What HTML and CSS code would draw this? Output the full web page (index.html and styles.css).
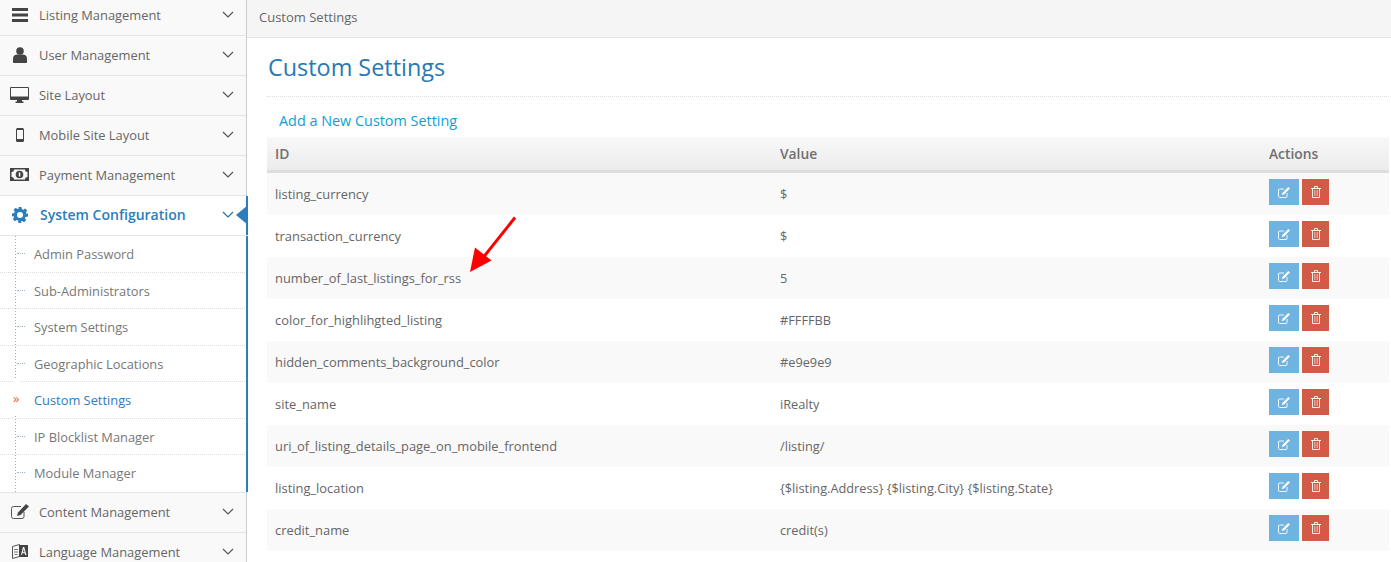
FILE: index.html
```html
<!DOCTYPE html>
<html lang="en">
<head>
<meta charset="utf-8">
<title>Custom Settings</title>
<link rel="stylesheet" href="styles.css">
</head>
<body>
<div class="layout">
  <nav class="sidebar">
    <a class="nav-item first"><span class="nav-icon"><svg width="16" height="14" viewBox="0 0 16 14"><path fill="#444" d="M0 0h16v3H0zM0 5.500h16v3H0zM0 11h16v3H0z"/></svg></span><span class="nav-label">Listing Management</span><svg class="chev" width="12" height="7" viewBox="0 0 12 7"><path d="M1 1l5 5 5-5" fill="none" stroke="#555" stroke-width="1.200"/></svg></a>
    <a class="nav-item"><span class="nav-icon"><svg width="14" height="16" viewBox="0 0 14 16"><circle cx="7" cy="4" r="3.800" fill="#444"/><path fill="#444" d="M0 15v-3.500C0 9 2 7.500 4 7.500h6c2 0 4 1.500 4 4V15c0 .6-.4 1-1 1H1c-.6 0-1-.4-1-1z"/></svg></span><span class="nav-label">User Management</span><svg class="chev" width="12" height="7" viewBox="0 0 12 7"><path d="M1 1l5 5 5-5" fill="none" stroke="#555" stroke-width="1.200"/></svg></a>
    <a class="nav-item"><span class="nav-icon"><svg width="19" height="16" viewBox="0 0 19 16"><path fill="#444" d="M1 0h17a1 1 0 0 1 1 1v11a1 1 0 0 1-1 1h-6v1.500h1.500V16h-8v-1.500H7V13H1a1 1 0 0 1-1-1V1a1 1 0 0 1 1-1z"/><rect x="1" y="1" width="17" height="8.500" fill="#fafafa"/></svg></span><span class="nav-label">Site Layout</span><svg class="chev" width="12" height="7" viewBox="0 0 12 7"><path d="M1 1l5 5 5-5" fill="none" stroke="#555" stroke-width="1.200"/></svg></a>
    <a class="nav-item"><span class="nav-icon"><svg width="8" height="14" viewBox="0 0 8 14"><rect width="8" height="14" rx="1.500" fill="#444"/><rect x="1" y="2" width="6" height="9" fill="#fafafa"/></svg></span><span class="nav-label">Mobile Site Layout</span><svg class="chev" width="12" height="7" viewBox="0 0 12 7"><path d="M1 1l5 5 5-5" fill="none" stroke="#555" stroke-width="1.200"/></svg></a>
    <a class="nav-item"><span class="nav-icon"><svg width="19" height="13" viewBox="0 0 19 13"><rect width="19" height="13" fill="#444"/><path fill="#fafafa" d="M4 1.500h11a2.500 2.500 0 0 0 2.500 2.500v5A2.500 2.500 0 0 0 15 11.500H4A2.500 2.500 0 0 0 1.500 9V4A2.500 2.500 0 0 0 4 1.500z"/><circle cx="9.500" cy="6.500" r="3.800" fill="#444"/><rect x="8.800" y="4.500" width="1.500" height="4" fill="#fafafa"/></svg></span><span class="nav-label">Payment Management</span><svg class="chev" width="12" height="7" viewBox="0 0 12 7"><path d="M1 1l5 5 5-5" fill="none" stroke="#555" stroke-width="1.200"/></svg></a>
    <div class="nav-group">
      <a class="nav-item active"><span class="nav-icon"><svg width="16" height="16" viewBox="0 0 16 16"><path fill="#2b7dbc" fill-rule="evenodd" d="M6.500 0h3l.4 2.200 1.300.6L13.100 1.500l2.100 2.100-1.300 1.900.6 1.300L16 6.500v3l-2.500.4-.6 1.300 1.300 1.900-2.100 2.100-1.900-1.300-1.300.6L9.500 16h-3l-.4-2.500-1.300-.6-1.900 1.300L.8 12.100l1.300-1.900-.6-1.300L0 9.500v-3l2.200-.4.600-1.300L1.500 2.900 3.600.8l1.900 1.300 1.300-.6zM8 5a3 3 0 1 0 0 6 3 3 0 0 0 0-6z"/></svg></span><span class="nav-label">System Configuration</span><svg class="chev" width="12" height="7" viewBox="0 0 12 7"><path d="M1 1l5 5 5-5" fill="none" stroke="#2b6ea3" stroke-width="1.200"/></svg><span class="notch"></span></a>
      <ul class="submenu">
        <li><a>Admin Password</a></li>
        <li><a>Sub-Administrators</a></li>
        <li><a>System Settings</a></li>
        <li><a>Geographic Locations</a></li>
        <li class="current"><a>Custom Settings</a></li>
        <li><a>IP Blocklist Manager</a></li>
        <li><a>Module Manager</a></li>
      </ul>
    </div>
    <a class="nav-item"><span class="nav-icon"><svg width="18" height="15" viewBox="0 0 18 15"><path d="M13 8v4.500a2 2 0 0 1-2 2H2.500a2 2 0 0 1-2-2V4.500a2 2 0 0 1 2-2H10" fill="none" stroke="#555" stroke-width="1"/><path fill="#444" d="M15 0l3 2.500-8.500 8.500-3.500 1 1-3.500z"/></svg></span><span class="nav-label">Content Management</span><svg class="chev" width="12" height="7" viewBox="0 0 12 7"><path d="M1 1l5 5 5-5" fill="none" stroke="#555" stroke-width="1.200"/></svg></a>
    <a class="nav-item"><span class="nav-icon"><svg width="16" height="18" viewBox="0 0 16 18"><path fill="none" stroke="#555" d="M.500 3.500l7-2v12l-7 2z"/><path d="M2 6.500h4M2 9h4M2.500 11.500h3" stroke="#777"/><path fill="#444" d="M7 2h9v12H7z"/><path fill="#fafafa" d="M11 4h1.200l2.300 8h-1.300l-.5-1.800h-2.400l-.5 1.800H9zM10.900 9.200h1.700l-.8-3.300z"/></svg></span><span class="nav-label">Language Management</span><svg class="chev" width="12" height="7" viewBox="0 0 12 7"><path d="M1 1l5 5 5-5" fill="none" stroke="#555" stroke-width="1.200"/></svg></a>
  </nav>
  <main class="main">
    <div class="crumbs">Custom Settings</div>
    <div class="page">
      <h1 class="title">Custom Settings</h1>
      <a class="add-link">Add a New Custom Setting</a>
      <table class="grid">
        <thead><tr><th class="col-id">ID</th><th class="col-value">Value</th><th>Actions</th></tr></thead>
        <tbody id="rows">
          <tr><td>listing_currency</td><td>$</td><td><span class="actions"><a class="btn edit"><svg width="12" height="11" viewBox="0 0 12 11"><path d="M9 6v3.500a1 1 0 0 1-1 1H1.500a1 1 0 0 1-1-1V3a1 1 0 0 1 1-1H6" fill="none" stroke="#fff" stroke-width=".9"/><path fill="#fff" d="M10.300 0L12 1.500 6 7.500l-2.200.6.600-2.200z"/></svg></a><a class="btn del"><svg width="10" height="12" viewBox="0 0 10 12"><path d="M0 2.500h10M3.500 2.500V.5h3v2M1.500 2.500V11.500h7V2.500" fill="none" stroke="#fff" stroke-width=".9"/><path d="M3.500 4v6M5 4v6M6.500 4v6" stroke="#f0b4a8" stroke-width=".8"/></svg></a></span></td></tr>
          <tr><td>transaction_currency</td><td>$</td><td><span class="actions"><a class="btn edit"><svg width="12" height="11" viewBox="0 0 12 11"><path d="M9 6v3.500a1 1 0 0 1-1 1H1.500a1 1 0 0 1-1-1V3a1 1 0 0 1 1-1H6" fill="none" stroke="#fff" stroke-width=".9"/><path fill="#fff" d="M10.300 0L12 1.500 6 7.500l-2.200.6.600-2.200z"/></svg></a><a class="btn del"><svg width="10" height="12" viewBox="0 0 10 12"><path d="M0 2.500h10M3.500 2.500V.5h3v2M1.500 2.500V11.500h7V2.500" fill="none" stroke="#fff" stroke-width=".9"/><path d="M3.500 4v6M5 4v6M6.500 4v6" stroke="#f0b4a8" stroke-width=".8"/></svg></a></span></td></tr>
          <tr><td>number_of_last_listings_for_rss</td><td>5</td><td><span class="actions"><a class="btn edit"><svg width="12" height="11" viewBox="0 0 12 11"><path d="M9 6v3.500a1 1 0 0 1-1 1H1.500a1 1 0 0 1-1-1V3a1 1 0 0 1 1-1H6" fill="none" stroke="#fff" stroke-width=".9"/><path fill="#fff" d="M10.300 0L12 1.500 6 7.500l-2.200.6.600-2.200z"/></svg></a><a class="btn del"><svg width="10" height="12" viewBox="0 0 10 12"><path d="M0 2.500h10M3.500 2.500V.5h3v2M1.500 2.500V11.500h7V2.500" fill="none" stroke="#fff" stroke-width=".9"/><path d="M3.500 4v6M5 4v6M6.500 4v6" stroke="#f0b4a8" stroke-width=".8"/></svg></a></span></td></tr>
          <tr><td>color_for_highlihgted_listing</td><td>#FFFFBB</td><td><span class="actions"><a class="btn edit"><svg width="12" height="11" viewBox="0 0 12 11"><path d="M9 6v3.500a1 1 0 0 1-1 1H1.500a1 1 0 0 1-1-1V3a1 1 0 0 1 1-1H6" fill="none" stroke="#fff" stroke-width=".9"/><path fill="#fff" d="M10.300 0L12 1.500 6 7.500l-2.200.6.600-2.200z"/></svg></a><a class="btn del"><svg width="10" height="12" viewBox="0 0 10 12"><path d="M0 2.500h10M3.500 2.500V.5h3v2M1.500 2.500V11.500h7V2.500" fill="none" stroke="#fff" stroke-width=".9"/><path d="M3.500 4v6M5 4v6M6.500 4v6" stroke="#f0b4a8" stroke-width=".8"/></svg></a></span></td></tr>
          <tr><td>hidden_comments_background_color</td><td>#e9e9e9</td><td><span class="actions"><a class="btn edit"><svg width="12" height="11" viewBox="0 0 12 11"><path d="M9 6v3.500a1 1 0 0 1-1 1H1.500a1 1 0 0 1-1-1V3a1 1 0 0 1 1-1H6" fill="none" stroke="#fff" stroke-width=".9"/><path fill="#fff" d="M10.300 0L12 1.500 6 7.500l-2.200.6.600-2.200z"/></svg></a><a class="btn del"><svg width="10" height="12" viewBox="0 0 10 12"><path d="M0 2.500h10M3.500 2.500V.5h3v2M1.500 2.500V11.500h7V2.500" fill="none" stroke="#fff" stroke-width=".9"/><path d="M3.500 4v6M5 4v6M6.500 4v6" stroke="#f0b4a8" stroke-width=".8"/></svg></a></span></td></tr>
          <tr><td>site_name</td><td>iRealty</td><td><span class="actions"><a class="btn edit"><svg width="12" height="11" viewBox="0 0 12 11"><path d="M9 6v3.500a1 1 0 0 1-1 1H1.500a1 1 0 0 1-1-1V3a1 1 0 0 1 1-1H6" fill="none" stroke="#fff" stroke-width=".9"/><path fill="#fff" d="M10.300 0L12 1.500 6 7.500l-2.200.6.600-2.200z"/></svg></a><a class="btn del"><svg width="10" height="12" viewBox="0 0 10 12"><path d="M0 2.500h10M3.500 2.500V.5h3v2M1.500 2.500V11.500h7V2.500" fill="none" stroke="#fff" stroke-width=".9"/><path d="M3.500 4v6M5 4v6M6.500 4v6" stroke="#f0b4a8" stroke-width=".8"/></svg></a></span></td></tr>
          <tr><td>uri_of_listing_details_page_on_mobile_frontend</td><td>/listing/</td><td><span class="actions"><a class="btn edit"><svg width="12" height="11" viewBox="0 0 12 11"><path d="M9 6v3.500a1 1 0 0 1-1 1H1.500a1 1 0 0 1-1-1V3a1 1 0 0 1 1-1H6" fill="none" stroke="#fff" stroke-width=".9"/><path fill="#fff" d="M10.300 0L12 1.500 6 7.500l-2.200.6.600-2.200z"/></svg></a><a class="btn del"><svg width="10" height="12" viewBox="0 0 10 12"><path d="M0 2.500h10M3.500 2.500V.5h3v2M1.500 2.500V11.500h7V2.500" fill="none" stroke="#fff" stroke-width=".9"/><path d="M3.500 4v6M5 4v6M6.500 4v6" stroke="#f0b4a8" stroke-width=".8"/></svg></a></span></td></tr>
          <tr><td>listing_location</td><td>{$listing.Address} {$listing.City} {$listing.State}</td><td><span class="actions"><a class="btn edit"><svg width="12" height="11" viewBox="0 0 12 11"><path d="M9 6v3.500a1 1 0 0 1-1 1H1.500a1 1 0 0 1-1-1V3a1 1 0 0 1 1-1H6" fill="none" stroke="#fff" stroke-width=".9"/><path fill="#fff" d="M10.300 0L12 1.500 6 7.500l-2.200.6.600-2.200z"/></svg></a><a class="btn del"><svg width="10" height="12" viewBox="0 0 10 12"><path d="M0 2.500h10M3.500 2.500V.5h3v2M1.500 2.500V11.500h7V2.500" fill="none" stroke="#fff" stroke-width=".9"/><path d="M3.500 4v6M5 4v6M6.500 4v6" stroke="#f0b4a8" stroke-width=".8"/></svg></a></span></td></tr>
          <tr><td>credit_name</td><td>credit(s)</td><td><span class="actions"><a class="btn edit"><svg width="12" height="11" viewBox="0 0 12 11"><path d="M9 6v3.500a1 1 0 0 1-1 1H1.500a1 1 0 0 1-1-1V3a1 1 0 0 1 1-1H6" fill="none" stroke="#fff" stroke-width=".9"/><path fill="#fff" d="M10.300 0L12 1.500 6 7.500l-2.200.6.600-2.200z"/></svg></a><a class="btn del"><svg width="10" height="12" viewBox="0 0 10 12"><path d="M0 2.500h10M3.500 2.500V.5h3v2M1.500 2.500V11.500h7V2.500" fill="none" stroke="#fff" stroke-width=".9"/><path d="M3.500 4v6M5 4v6M6.500 4v6" stroke="#f0b4a8" stroke-width=".8"/></svg></a></span></td></tr>
        </tbody>
      </table>
    </div>
  </main>
</div>
<svg class="annotation" width="50" height="60" viewBox="0 0 50 60"><path d="M47 1.500L14 43" fill="none" stroke="#f00" stroke-width="3"/><path fill="#f00" d="M2 56L7 31.500l16.500 13z"/></svg>
</body>
</html>
```
FILE: styles.css
```css
html, body {
  margin: 0;
  padding: 0;
  height: 562px;
  overflow: hidden;
  background: #fff;
  font-family: "Open Sans", "Liberation Sans", sans-serif;
  font-size: 13px;
  color: #555;
}
.layout {
  display: flex;
  align-items: flex-start;
  height: 562px;
  overflow: hidden;
}
.sidebar {
  position: relative;
  z-index: 1;
  width: 246px;
  height: 566px;
  flex: none;
  margin-top: -4px;
  background: #f9f9f9;
  border-right: 1px solid #ccc;
}
.nav-item {
  display: flex;
  align-items: center;
  position: relative;
  height: 37px;
  padding-bottom: 2px;
  border-bottom: 1px solid #e5e5e5;
  background: #f9f9f9;
  color: #666;
  font-size: 12.900px;
}
.nav-icon {
  width: 39px;
  flex: none;
  display: flex;
  justify-content: center;
}
.nav-label { flex: 1; }
.chev { margin-right: 12px; flex: none; }
.nav-group {
  background: #fff;
  box-shadow: inset -2px 0 0 #2b7dbc;
  margin-right: -2px;
}
.nav-item.active {
  background: #fff;
  color: #2b7dbc;
  font-weight: 600;
  font-size: 14px;
  box-shadow: inset -2px 0 0 #2b7dbc;
}
.nav-item.active .nav-label { padding-left: 1px; }
.nav-item.active .chev { margin-right: 14px; }
.notch {
  position: absolute;
  right: 0;
  top: 9px;
  border: 10px solid transparent;
  border-right: 12px solid #2b7dbc;
  border-left: 0;
}
.submenu {
  list-style: none;
  margin: 0;
  padding: 0 3px 0 0;
  background-image: linear-gradient(#9db4c8 50%, transparent 50%);
  background-size: 1px 3px;
  background-repeat: repeat-y;
  background-position: 15px 0;
}
.submenu li {
  position: relative;
  height: 36.500px;
  box-sizing: border-box;
  line-height: 36px;
  border-bottom: 1px dotted #ddd;
  padding-left: 34px;
  font-size: 12.850px;
  color: #777;
}
.submenu li:last-child {
  height: 38px;
  margin-right: -3px;
  border-bottom: 1px solid #e5e5e5;
}
.submenu li::before {
  content: "";
  position: absolute;
  left: 17px;
  top: 17px;
  width: 8px;
  border-top: 1px dotted #9db4c8;
}
.submenu li.current { color: #2b7dbc; }
.submenu li.current::before {
  content: "\00BB";
  left: 13px;
  top: -2px;
  width: auto;
  border: 0;
  background: #fff;
  color: #e8662a;
  font-size: 13px;
  line-height: 36px;
  height: 34px;
}
.main {
  flex: 1;
  min-width: 0;
}
.crumbs {
  height: 37px;
  line-height: 35px;
  padding-left: 12px;
  font-size: 13px;
  background: #f5f5f5;
  border-bottom: 1px solid #e5e5e5;
  color: #666;
}
.page { padding: 0 2px 0 20px; }
.title {
  margin: 0;
  height: 59px;
  box-sizing: border-box;
  line-height: 58px;
  padding-left: 1px;
  font-size: 23.400px;
  font-weight: 400;
  color: #2679b5;
  border-bottom: 1px dotted #ddd;
}
.add-link {
  display: block;
  height: 40px;
  line-height: 48px;
  padding-left: 12px;
  font-size: 14.400px;
  color: #0e9fd8;
}
.grid {
  width: 100%;
  border-collapse: separate;
  border-spacing: 0;
  table-layout: fixed;
}
.grid th {
  height: 33px;
  padding: 0 8px;
  text-align: left;
  font-size: 13.800px;
  font-weight: 600;
  color: #707070;
  background: linear-gradient(#f8f8f8, #ececec);
  border-bottom: 3px solid #ddd;
}
.col-id { width: 489px; }
.col-value { width: 473px; }
.grid td {
  height: 42px;
  padding: 0 8px;
  box-sizing: border-box;
  font-size: 12.750px;
  color: #666;
}
.grid td:first-child { font-size: 12.900px; }
.grid td:last-child {
  vertical-align: top;
  padding-top: 6px;
}
.grid tbody tr:nth-child(odd) td { background: #f9f9f9; }
.actions {
  display: flex;
  gap: 3px;
}
.btn {
  display: flex;
  align-items: center;
  justify-content: center;
  height: 26px;
}
.edit { width: 30px; background: #6fb3e0; }
.del { width: 27px; background: #d15b47; }
.annotation {
  position: absolute;
  left: 468px;
  top: 216px;
}
```
